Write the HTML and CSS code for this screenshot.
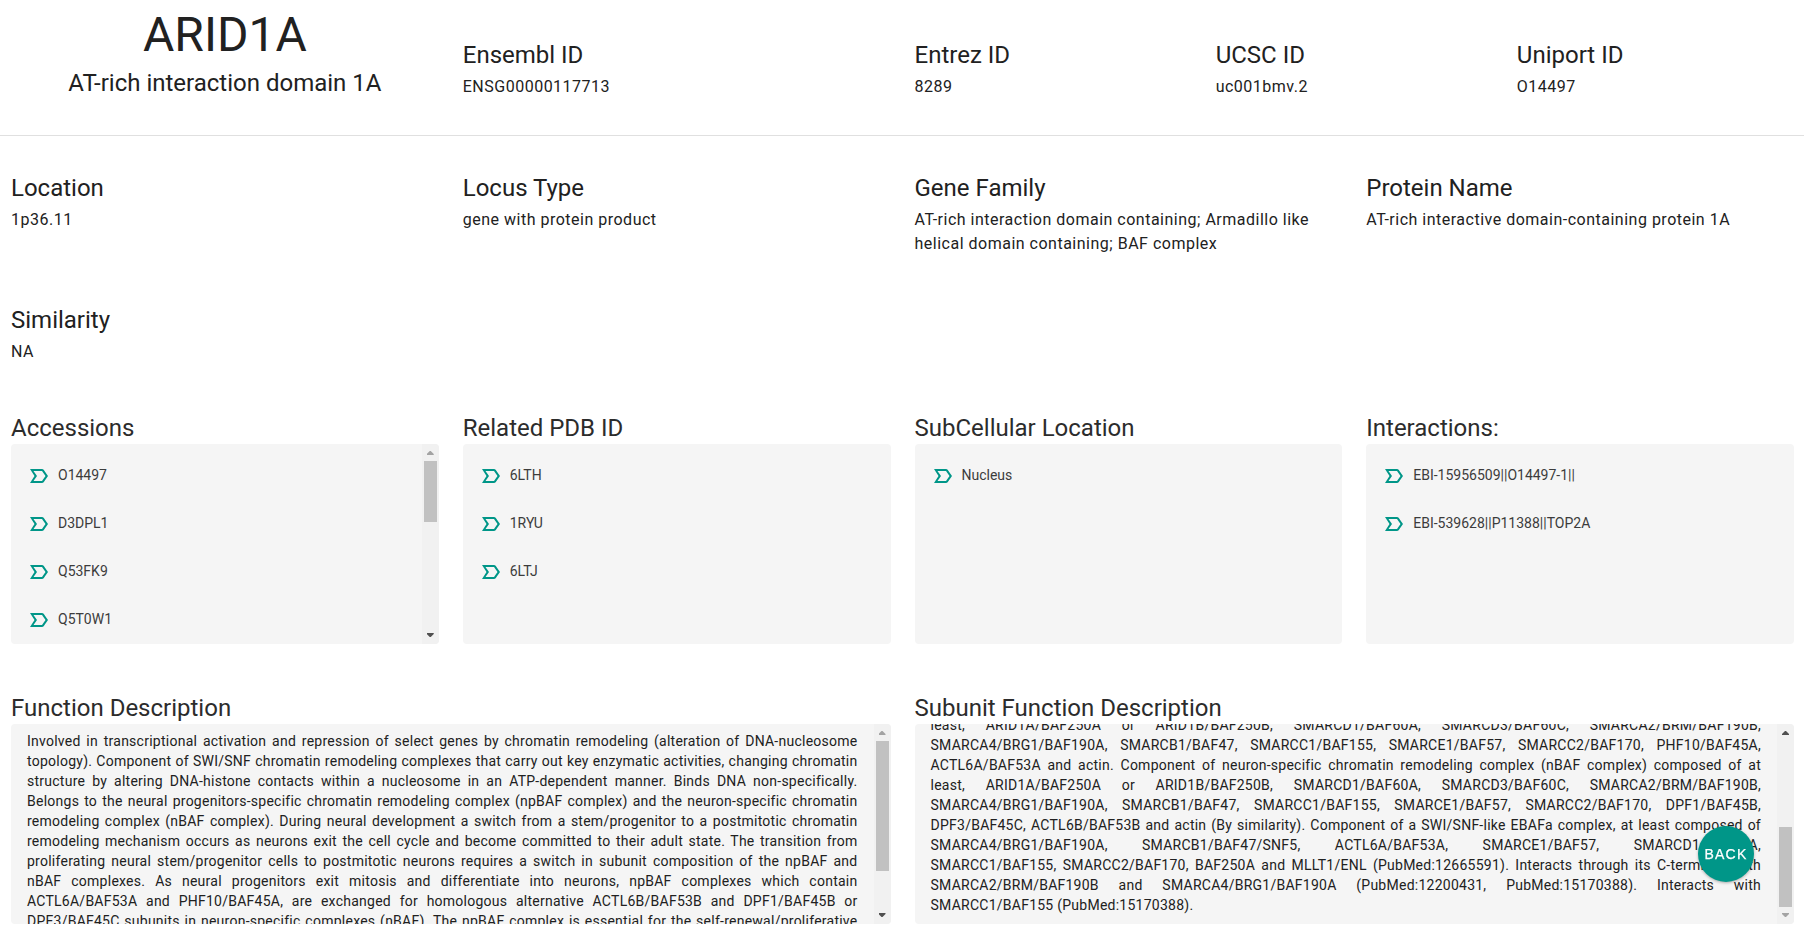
FILE: index.html
```html
<!DOCTYPE html>
<html lang="en">
<head>
<meta charset="utf-8">
<title>ARID1A</title>
<link rel="stylesheet" href="styles.css">
</head>
<body>
<svg class="defs" width="0" height="0"><symbol id="tag" viewBox="0 0 24 24"><path d="M15 19H3l4.5-7L3 5h12c.65 0 1.26.31 1.63.84L21 12l-4.37 6.16c-.37.52-.98.84-1.63.84zM6.5 17H15l3.5-5L15 7H6.5l3.5 5z"/></symbol></svg>
<main class="page">
  <header class="row header">
    <div class="col c3 gene"><h1>ARID1A</h1><h2>AT-rich interaction domain 1A</h2></div>
    <div class="col c3 ident"><h2>Ensembl ID</h2><p>ENSG00000117713</p></div>
    <div class="col c2 ident"><h2>Entrez ID</h2><p>8289</p></div>
    <div class="col c2 ident"><h2>UCSC ID</h2><p>uc001bmv.2</p></div>
    <div class="col c2 ident"><h2>Uniport ID</h2><p>O14497</p></div>
  </header>
  <section class="row facts">
    <div class="col c3"><h2>Location</h2><p>1p36.11</p></div>
    <div class="col c3"><h2>Locus Type</h2><p>gene with protein product</p></div>
    <div class="col c3"><h2>Gene Family</h2><p>AT-rich interaction domain containing; Armadillo like helical domain containing; BAF complex</p></div>
    <div class="col c3"><h2>Protein Name</h2><p>AT-rich interactive domain-containing protein 1A</p></div>
  </section>
  <section class="row similarity">
    <div class="col c3"><h2>Similarity</h2><p>NA</p></div>
  </section>
  <section class="row lists">
    <div class="col c3"><h2>Accessions</h2>
      <div class="panel">
        <ul><li><svg><use href="#tag"/></svg>O14497</li><li><svg><use href="#tag"/></svg>D3DPL1</li><li><svg><use href="#tag"/></svg>Q53FK9</li><li><svg><use href="#tag"/></svg>Q5T0W1</li></ul>
        <div class="bar"><i class="up off"></i><div class="track"><b class="thumb t-acc"></b></div><i class="down"></i></div>
      </div>
    </div>
    <div class="col c3"><h2>Related PDB ID</h2>
      <div class="panel"><ul><li><svg><use href="#tag"/></svg>6LTH</li><li><svg><use href="#tag"/></svg>1RYU</li><li><svg><use href="#tag"/></svg>6LTJ</li></ul></div>
    </div>
    <div class="col c3"><h2>SubCellular Location</h2>
      <div class="panel"><ul><li><svg><use href="#tag"/></svg>Nucleus</li></ul></div>
    </div>
    <div class="col c3"><h2>Interactions:</h2>
      <div class="panel"><ul><li><svg><use href="#tag"/></svg>EBI-15956509||O14497-1||</li><li><svg><use href="#tag"/></svg>EBI-539628||P11388||TOP2A</li></ul></div>
    </div>
  </section>
  <section class="row texts">
    <div class="col c6"><h2>Function Description</h2>
      <div class="panel">
        <div class="prose">
          <span>Involved in transcriptional activation and repression of select genes by chromatin remodeling (alteration of DNA-nucleosome</span>
          <span>topology). Component of SWI/SNF chromatin remodeling complexes that carry out key enzymatic activities, changing chromatin</span>
          <span>structure by altering DNA-histone contacts within a nucleosome in an ATP-dependent manner. Binds DNA non-specifically.</span>
          <span>Belongs to the neural progenitors-specific chromatin remodeling complex (npBAF complex) and the neuron-specific chromatin</span>
          <span>remodeling complex (nBAF complex). During neural development a switch from a stem/progenitor to a postmitotic chromatin</span>
          <span>remodeling mechanism occurs as neurons exit the cell cycle and become committed to their adult state. The transition from</span>
          <span>proliferating neural stem/progenitor cells to postmitotic neurons requires a switch in subunit composition of the npBAF and</span>
          <span>nBAF complexes. As neural progenitors exit mitosis and differentiate into neurons, npBAF complexes which contain</span>
          <span>ACTL6A/BAF53A and PHF10/BAF45A, are exchanged for homologous alternative ACTL6B/BAF53B and DPF1/BAF45B or</span>
          <span>DPF3/BAF45C subunits in neuron-specific complexes (nBAF). The npBAF complex is essential for the self-renewal/proliferative</span>
        </div>
        <div class="bar"><i class="up off"></i><div class="track"><b class="thumb t-fn"></b></div><i class="down"></i></div>
      </div>
    </div>
    <div class="col c6"><h2>Subunit Function Description</h2>
      <div class="panel">
        <div class="prose scrolled">
          <span>least, ARID1A/BAF250A or ARID1B/BAF250B, SMARCD1/BAF60A, SMARCD3/BAF60C, SMARCA2/BRM/BAF190B,</span>
          <span>SMARCA4/BRG1/BAF190A, SMARCB1/BAF47, SMARCC1/BAF155, SMARCE1/BAF57, SMARCC2/BAF170, PHF10/BAF45A,</span>
          <span>ACTL6A/BAF53A and actin. Component of neuron-specific chromatin remodeling complex (nBAF complex) composed of at</span>
          <span>least, ARID1A/BAF250A or ARID1B/BAF250B, SMARCD1/BAF60A, SMARCD3/BAF60C, SMARCA2/BRM/BAF190B,</span>
          <span>SMARCA4/BRG1/BAF190A, SMARCB1/BAF47, SMARCC1/BAF155, SMARCE1/BAF57, SMARCC2/BAF170, DPF1/BAF45B,</span>
          <span>DPF3/BAF45C, ACTL6B/BAF53B and actin (By similarity). Component of a SWI/SNF-like EBAFa complex, at least composed of</span>
          <span>SMARCA4/BRG1/BAF190A, SMARCB1/BAF47/SNF5, ACTL6A/BAF53A, SMARCE1/BAF57, SMARCD1/BAF60A,</span>
          <span>SMARCC1/BAF155, SMARCC2/BAF170, BAF250A and MLLT1/ENL (PubMed:12665591). Interacts through its C-terminus with</span>
          <span>SMARCA2/BRM/BAF190B and SMARCA4/BRG1/BAF190A (PubMed:12200431, PubMed:15170388). Interacts with</span>
          <span class="last">SMARCC1/BAF155 (PubMed:15170388).</span>
        </div>
        <div class="bar"><i class="up"></i><div class="track"><b class="thumb t-sub"></b></div><i class="down off"></i></div>
      </div>
    </div>
  </section>
</main>
<button class="back">BACK</button>
</body>
</html>
```
FILE: styles.css
```css
* { box-sizing: border-box; }
body { margin: 0; height: 941px; overflow: hidden; background: #fff; color: #212121; font-family: Roboto, "Liberation Sans", sans-serif; }
h1, h2, p, ul { margin: 0; padding: 0; font-weight: 400; }
.defs { display: block; height: 0; }
.page { width: 1807px; margin-left: -1px; }
.row { display: flex; }
.col { padding: 0 12px; min-width: 0; }
.c2 { flex: 0 0 16.6667%; }
.c3 { flex: 0 0 25%; }
.c6 { flex: 0 0 50%; }
h1 { font-size: 48px; line-height: 50px; }
h2 { font-size: 24px; line-height: 32px; }
p { padding-top: 4px; font-size: 16px; line-height: 24px; letter-spacing: .5px; }
.header { height: 136px; border-bottom: 1px solid #e0e0e0; padding-top: 10px; }
.gene { text-align: center; }
.gene h1 { margin-bottom: 7px; }
.ident { padding-top: 29px; }
.facts { height: 132px; padding-top: 36px; }
.similarity { height: 144px; padding-top: 36px; }
.lists { height: 280px; }
.lists, .texts { color: #2c2c2c; }
.panel { display: flex; height: 200px; background: #f5f5f5; border-radius: 4px; overflow: hidden; }
ul { flex: 1; list-style: none; padding: 8px 16px; }
li { display: flex; align-items: center; height: 48px; color: #3c3c3c; font-size: 14px; line-height: 18px; padding-bottom: 2px; }
li svg { width: 24px; height: 24px; margin: 2px 7px 0 0; fill: #009688; }
.prose { flex: 1; min-width: 0; padding: 7px 16px; color: #212121; font-size: 14px; line-height: 20px; letter-spacing: .25px; }
.prose span { display: block; text-align-last: justify; white-space: nowrap; }
.prose .last { text-align-last: left; }
.prose.scrolled { margin-top: -16px; }
.bar { flex: 0 0 17px; display: flex; flex-direction: column; align-items: center; padding: 7px 0; background: #f1f1f1; }
.track { flex: 1; padding: 6px 0; }
.thumb { display: block; width: 13px; background: #c1c1c1; }
.t-acc { height: 61px; }
.t-fn { height: 130px; }
.t-sub { height: 80px; margin-top: 86px; }
.up, .down { width: 7px; height: 4px; background: #505050; }
.up { clip-path: polygon(3px 0, 4px 0, 7px 3px, 7px 4px, 0 4px, 0 3px); }
.down { clip-path: polygon(0 0, 7px 0, 7px 1px, 4px 4px, 3px 4px, 0 1px); }
.off { background: #a3a3a3; }
.back { position: fixed; left: 1698px; top: 826px; width: 56px; height: 56px; padding: 0; border: 0; border-radius: 50%; background: #009688; color: #fff; font: 500 14px "Liberation Sans", Arial, sans-serif; -webkit-text-stroke: .25px #fff; letter-spacing: 1.25px; box-shadow: 0 1px 3px rgba(0,0,0,.3); }
```
